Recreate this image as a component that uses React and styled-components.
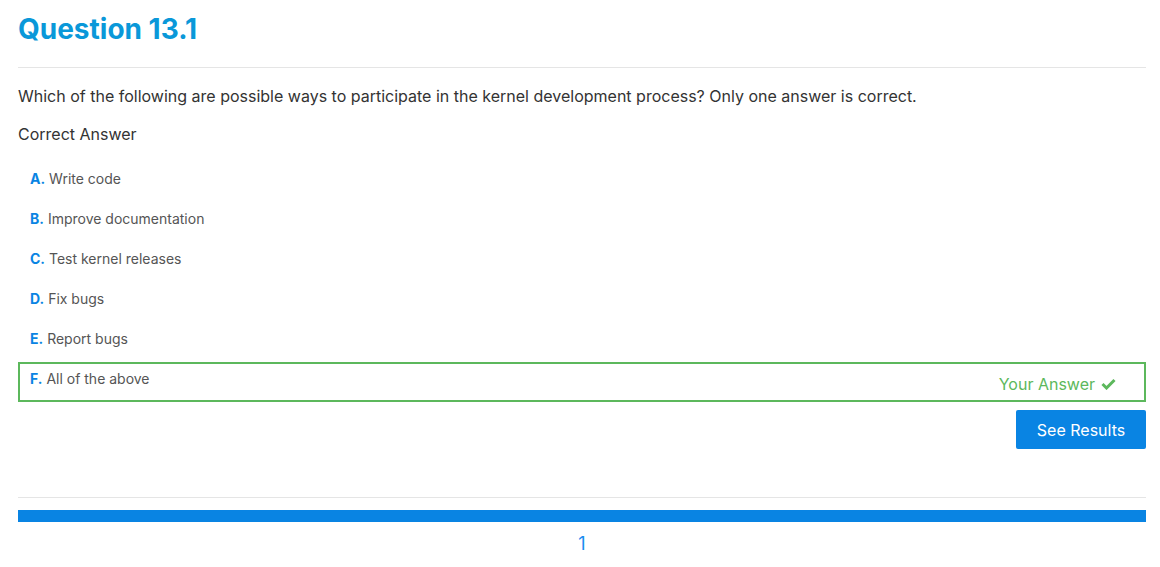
import React from 'react';
import styled, { createGlobalStyle } from 'styled-components';

const GlobalStyle = createGlobalStyle`
  body {
    margin: 0;
    font-family: Inter, "Noto Sans", sans-serif;
    color: #333;
    background: #fff;
  }
`;

const options = [
  { letter: 'A', text: 'Write code' },
  { letter: 'B', text: 'Improve documentation' },
  { letter: 'C', text: 'Test kernel releases' },
  { letter: 'D', text: 'Fix bugs' },
  { letter: 'E', text: 'Report bugs' },
  { letter: 'F', text: 'All of the above', chosen: true },
];

const Check = () => (
  <svg width='15' height='12' viewBox='0 0 15 12'>
    <path d='M1.5 6 L5.5 10 L13.5 2' fill='none' stroke='#5cb85c' strokeWidth='3' />
  </svg>
);

const App = () => (
  <Page>
    <GlobalStyle />
    <Title>Question 13.1</Title>
    <Rule />
    <Prompt>
      Which of the following are possible ways to participate in the kernel development process? Only
      one answer is correct.
    </Prompt>
    <Subhead>Correct Answer</Subhead>
    <OptionList>
      {options.map((o) => (
        <Option key={o.letter} $chosen={o.chosen}>
          <Label>
            <Letter>{o.letter}.</Letter> {o.text}
          </Label>
          {o.chosen && (
            <YourAnswer>
              Your Answer <Check />
            </YourAnswer>
          )}
        </Option>
      ))}
    </OptionList>
    <Actions>
      <Button>See Results</Button>
    </Actions>
    <Footer>
      <Rule />
      <Progress />
      <Pager>1</Pager>
    </Footer>
  </Page>
);

const Page = styled.div`
  padding: 0 14px 0 18px;
  display: flex;
  flex-direction: column;
`;

const Title = styled.h1`
  margin: 10px 0 19px;
  font-size: 28px;
  line-height: 38px;
  font-weight: 700;
  color: #0a98d9;
`;

const Rule = styled.div`
  height: 1px;
  background: #e5e5e5;
`;

const Prompt = styled.p`
  margin: 0;
  padding-top: 18px;
  font-size: 16px;
  line-height: 20px;
  color: #333;
`;

const Subhead = styled.div`
  margin-top: 18px;
  font-size: 16px;
  line-height: 20px;
  color: #333;
`;

const OptionList = styled.div`
  margin-top: 18px;
  display: flex;
  flex-direction: column;
`;

const Option = styled.div`
  display: flex;
  justify-content: space-between;
  align-items: flex-start;
  height: 40px;
  box-sizing: border-box;
  padding: 5px 28px 5px 10px;
  border: 2px solid ${(p) => (p.$chosen ? '#5cb85c' : 'transparent')};
`;

const Label = styled.div`
  font-size: 14px;
  line-height: 20px;
  color: #555;
`;

const Letter = styled.span`
  font-weight: 700;
  color: #0984e3;
`;

const YourAnswer = styled.div`
  display: flex;
  align-items: center;
  gap: 6px;
  margin-top: 3px;
  font-size: 16px;
  line-height: 24px;
  color: #5cb85c;
`;

const Actions = styled.div`
  display: flex;
  justify-content: flex-end;
  margin-top: 8px;
`;

const Button = styled.button`
  width: 130px;
  height: 39px;
  border: none;
  border-radius: 2px;
  background: #0984e3;
  color: #fff;
  font-family: inherit;
  font-size: 16px;
`;

const Footer = styled.div`
  margin-top: 48px;
  display: flex;
  flex-direction: column;
`;

const Progress = styled.div`
  margin-top: 12px;
  height: 12px;
  background: #0984e3;
`;

const Pager = styled.div`
  margin-top: 11px;
  text-align: center;
  font-size: 18px;
  line-height: 22px;
  color: #1a8cf0;
`;

export default App;
